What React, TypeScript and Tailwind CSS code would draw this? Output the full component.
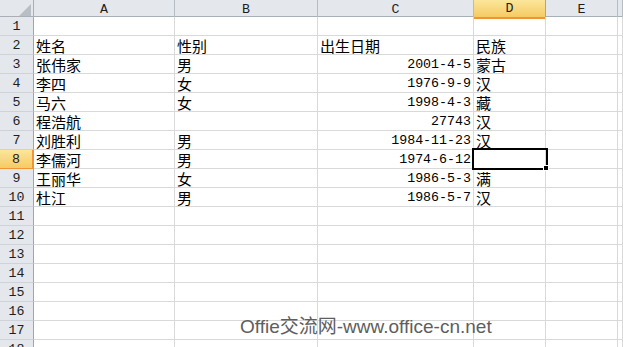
import React from "react";

type Row = { a?: string; b?: string; c?: string; d?: string };

const rows: Row[] = [
    {},
    { a: "姓名", b: "性别", c: "出生日期", d: "民族" },
    { a: "张伟家", b: "男", c: "2001-4-5", d: "蒙古" },
    { a: "李四", b: "女", c: "1976-9-9", d: "汉" },
    { a: "马六", b: "女", c: "1998-4-3", d: "藏" },
    { a: "程浩航", c: "27743", d: "汉" },
    { a: "刘胜利", b: "男", c: "1984-11-23", d: "汉" },
    { a: "李儒河", b: "男", c: "1974-6-12" },
    { a: "王丽华", b: "女", c: "1986-5-3", d: "满" },
    { a: "杜江", b: "男", c: "1986-5-7", d: "汉" },
    {}, {}, {}, {}, {}, {}, {}, {},
];

const cols = "grid grid-cols-[34px_141px_143px_156px_72px_72px_1fr]";
const cjk = "font-['Noto_Sans_CJK_SC',sans-serif] text-[15px] leading-[17px]";
const mono = "font-['Liberation_Mono','Noto_Sans_CJK_SC',monospace] text-[13.3px] leading-[17px]";

// a date cell is right aligned like a number, the header text stays left
const isNumber = (s?: string) => !!s && /^[0-9-]+$/.test(s);

const Cell: React.FC<{ text?: string }> = ({ text }) => (
    <div className={`h-[19px] border-r border-b border-[#d9d9d9] flex items-end px-[2px] overflow-visible whitespace-nowrap text-black ${isNumber(text) ? "justify-end" : ""}`}>
        {text && <span className={isNumber(text) ? mono : cjk}>{text}</span>}
    </div>
);

const App: React.FC = () => {
    return (
        <div className="relative w-[623px] h-[347px] overflow-hidden bg-white select-none">
            {/* column headers */}
            <div className={`${cols} h-[17px] bg-[#e4e7ec] border-b border-[#a9afb7]`}>
                <div className="border-r border-[#a9afb7] relative">
                    <svg width="12" height="12" className="absolute right-[2px] bottom-[2px]" viewBox="0 0 12 12">
                        <polygon points="12,0 12,12 0,12" fill="#b9bec5" />
                    </svg>
                </div>
                {["A", "B", "C", "D", "E", ""].map((l) => (
                    <div
                        key={l || "f"}
                        className={`flex items-center justify-center ${mono} text-[#1e1e1e] ${l === "D" ? "bg-gradient-to-b from-[#fbe69a] to-[#f5cb63] border-r border-[#f29436] -mb-px border-b-2 border-b-[#f29436]" : "border-r border-[#b7bcc3]"}`}
                    >
                        {l}
                    </div>
                ))}
            </div>

            {rows.map((r, i) => {
                const n = i + 1;
                const active = n === 8;
                return (
                    <div key={n} className={cols}>
                        <div className={`h-[19px] flex items-center justify-center ${mono} text-[#1e1e1e] border-b ${active ? "bg-gradient-to-b from-[#fbe69a] to-[#f5cb63] border-[#f29436] border-r-2 border-r-[#f29436]" : "bg-[#e4e7ec] border-[#cfd3d9] border-r border-r-[#9fa5ad]"}`}>
                            {n}
                        </div>
                        <Cell text={r.a} />
                        <Cell text={r.b} />
                        <Cell text={r.c} />
                        <Cell text={r.d} />
                        <Cell />
                        <Cell />
                    </div>
                );
            })}

            {/* active cell D8 */}
            <div className="absolute left-[472px] top-[148px] w-[76px] h-[22px] border-2 border-black" />
            <div className="absolute left-[543px] top-[165px] w-[6px] h-[6px] bg-black border border-white" />

            <div className="absolute left-[240px] top-[317px] text-[19px] leading-[19px] text-[#5e5e5e] font-['Liberation_Sans','Noto_Sans_CJK_SC',sans-serif] whitespace-nowrap">
                Offie交流网-www.office-cn.net
            </div>
        </div>
    );
};

export default App;
